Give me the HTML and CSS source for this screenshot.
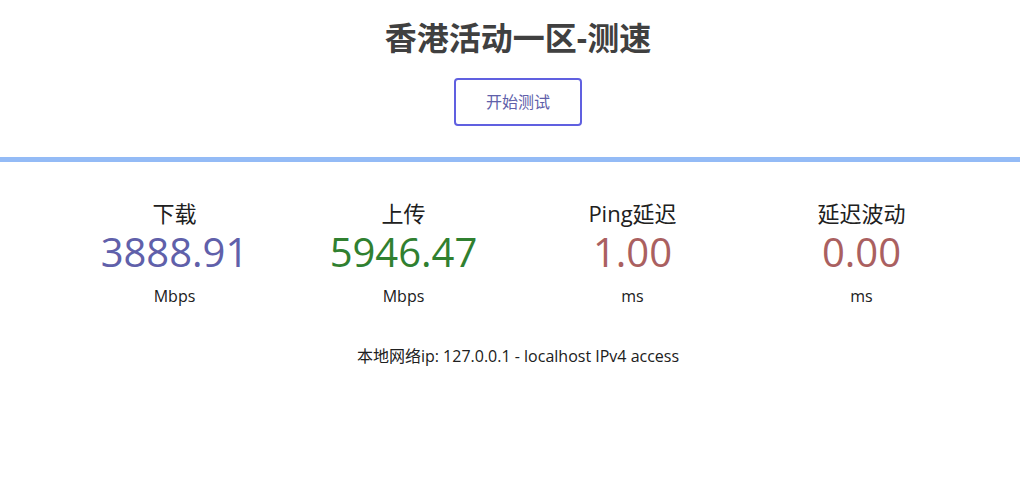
FILE: index.html
```html
<!DOCTYPE html>
<html lang="zh-CN">
<head>
<meta charset="utf-8">
<title>香港活动一区-测速</title>
<link rel="stylesheet" href="styles.css">
</head>
<body>
<header class="top">
  <h1 class="title">香港活动一区-测速</h1>
  <div class="btn-row"><div class="start-btn">开始测试</div></div>
</header>
<div class="progress"></div>
<main class="results">
  <div class="meters">
    <div class="meter">
      <div class="test-name">下载</div>
      <div class="meter-text dl">3888.91</div>
      <div class="unit">Mbps</div>
    </div>
    <div class="meter">
      <div class="test-name">上传</div>
      <div class="meter-text ul">5946.47</div>
      <div class="unit">Mbps</div>
    </div>
    <div class="meter">
      <div class="test-name">Ping延迟</div>
      <div class="meter-text ping">1.00</div>
      <div class="unit">ms</div>
    </div>
    <div class="meter">
      <div class="test-name">延迟波动</div>
      <div class="meter-text ping">0.00</div>
      <div class="unit">ms</div>
    </div>
  </div>
  <div class="ip">本地网络ip: 127.0.0.1 - localhost IPv4 access</div>
</main>
</body>
</html>
```
FILE: styles.css
```css
html, body {
  margin: 0;
  padding: 0;
  background: #ffffff;
}
body {
  font-family: "Open Sans", "Noto Sans CJK SC", sans-serif;
  color: #202020;
  font-size: 16px;
}
.top {
  padding-left: 16px;
  text-align: center;
}
.title {
  margin: 0;
  padding-top: 18px;
  font-size: 32px;
  line-height: 40px;
  font-weight: bold;
  color: #404040;
}
.btn-row {
  display: flex;
  justify-content: center;
  padding-top: 20px;
  padding-bottom: 31px;
}
.start-btn {
  box-sizing: border-box;
  width: 128px;
  height: 48px;
  border: 2px solid #6060e0;
  border-radius: 4px;
  color: #6060aa;
  font-size: 16px;
  line-height: 44px;
  text-align: center;
}
.progress {
  height: 5px;
  background: #94bbf6;
}
.results {
  padding-left: 16px;
  padding-top: 36px;
  text-align: center;
}
.meters {
  display: flex;
  justify-content: center;
}
.meter {
  width: 229px;
  text-align: center;
}
.test-name {
  font-size: 22px;
  line-height: 30px;
  color: #202020;
}
.meter-text {
  font-size: 40px;
  line-height: 48px;
}
.dl { color: #6060aa; }
.ul { color: #308030; }
.ping { color: #aa6060; }
.unit {
  margin-top: 10px;
  font-size: 16px;
  line-height: 20px;
}
.ip {
  margin-top: 40px;
  font-size: 16px;
  line-height: 20px;
}
```
